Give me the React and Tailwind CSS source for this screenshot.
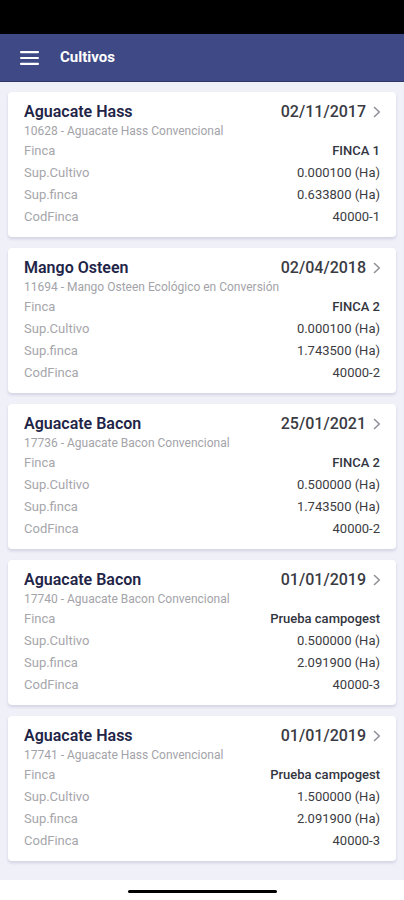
const cultivos = [
  { nombre: 'Aguacate Hass', fecha: '02/11/2017', detalle: '10628 - Aguacate Hass Convencional', finca: 'FINCA 1', supCultivo: '0.000100 (Ha)', supFinca: '0.633800 (Ha)', cod: '40000-1' },
  { nombre: 'Mango Osteen', fecha: '02/04/2018', detalle: '11694 - Mango Osteen Ecológico en Conversión', finca: 'FINCA 2', supCultivo: '0.000100 (Ha)', supFinca: '1.743500 (Ha)', cod: '40000-2' },
  { nombre: 'Aguacate Bacon', fecha: '25/01/2021', detalle: '17736 - Aguacate Bacon Convencional', finca: 'FINCA 2', supCultivo: '0.500000 (Ha)', supFinca: '1.743500 (Ha)', cod: '40000-2' },
  { nombre: 'Aguacate Bacon', fecha: '01/01/2019', detalle: '17740 - Aguacate Bacon Convencional', finca: 'Prueba campogest', supCultivo: '0.500000 (Ha)', supFinca: '2.091900 (Ha)', cod: '40000-3' },
  { nombre: 'Aguacate Hass', fecha: '01/01/2019', detalle: '17741 - Aguacate Hass Convencional', finca: 'Prueba campogest', supCultivo: '1.500000 (Ha)', supFinca: '2.091900 (Ha)', cod: '40000-3' },
];

const Fila = ({ label, value, bold }) => (
  <div className="flex justify-between items-center h-[22px] text-[13px]">
    <span className="text-[#a6a6ab]">{label}</span>
    <span className={bold ? 'text-[#33353f] font-medium' : 'text-[#3c3c42]'}>{value}</span>
  </div>
);

const CultivoCard = ({ c }) => (
  <div className="bg-white rounded-[4px] shadow-[0_2px_3px_rgba(40,50,110,0.15)] px-4 pt-[10px] pb-[9px]">
    <div className="flex justify-between items-center h-[20px]">
      <h3 className="text-[16px] font-semibold text-[#1f2548]">{c.nombre}</h3>
      <div className="flex items-center gap-[7px] text-[#3a3b43] -mr-[1px]">
        <span className="text-[16px] font-medium">{c.fecha}</span>
        <svg width="8" height="12" viewBox="0 0 8 12" className="text-[#8f9098]">
          <polyline points="1.5,1.5 6.3,6 1.5,10.5" fill="none" stroke="currentColor" strokeWidth="1.6" strokeLinecap="round" strokeLinejoin="round" />
        </svg>
      </div>
    </div>
    <p className="text-[12px] text-[#a3a3a9] leading-[14px] mt-[2px]">{c.detalle}</p>
    <div className="mt-[2px]">
      <Fila label="Finca" value={c.finca} bold />
      <Fila label="Sup.Cultivo" value={c.supCultivo} />
      <Fila label="Sup.finca" value={c.supFinca} />
      <Fila label="CodFinca" value={c.cod} />
    </div>
  </div>
);

export default function App() {
  return (
    <div className="w-[404px] h-[900px] flex flex-col bg-[#eff0f8] font-['Roboto',sans-serif] overflow-hidden">
      <div className="h-[34px] bg-black shrink-0" />
      <header className="h-[48px] bg-[#3e4985] border-b border-[#2d3668] flex items-center px-[20px] gap-[21px] shrink-0">
        <svg width="19" height="14" viewBox="0 0 19 14">
          <rect x="0" y="0" width="19" height="2.2" rx="1" fill="white" />
          <rect x="0" y="5.9" width="19" height="2.2" rx="1" fill="white" />
          <rect x="0" y="11.8" width="19" height="2.2" rx="1" fill="white" />
        </svg>
        <h1 className="text-white text-[15px] font-bold">Cultivos</h1>
      </header>
      <main className="flex flex-col gap-[11px] px-[8px] pt-[10px] flex-1">
        {cultivos.map((c, i) => (
          <CultivoCard key={i} c={c} />
        ))}
      </main>
      <div className="h-[20px] bg-white flex items-start justify-center shrink-0">
        <div className="w-[149px] h-[3px] bg-black rounded-full mt-[10px]" />
      </div>
    </div>
  );
}
